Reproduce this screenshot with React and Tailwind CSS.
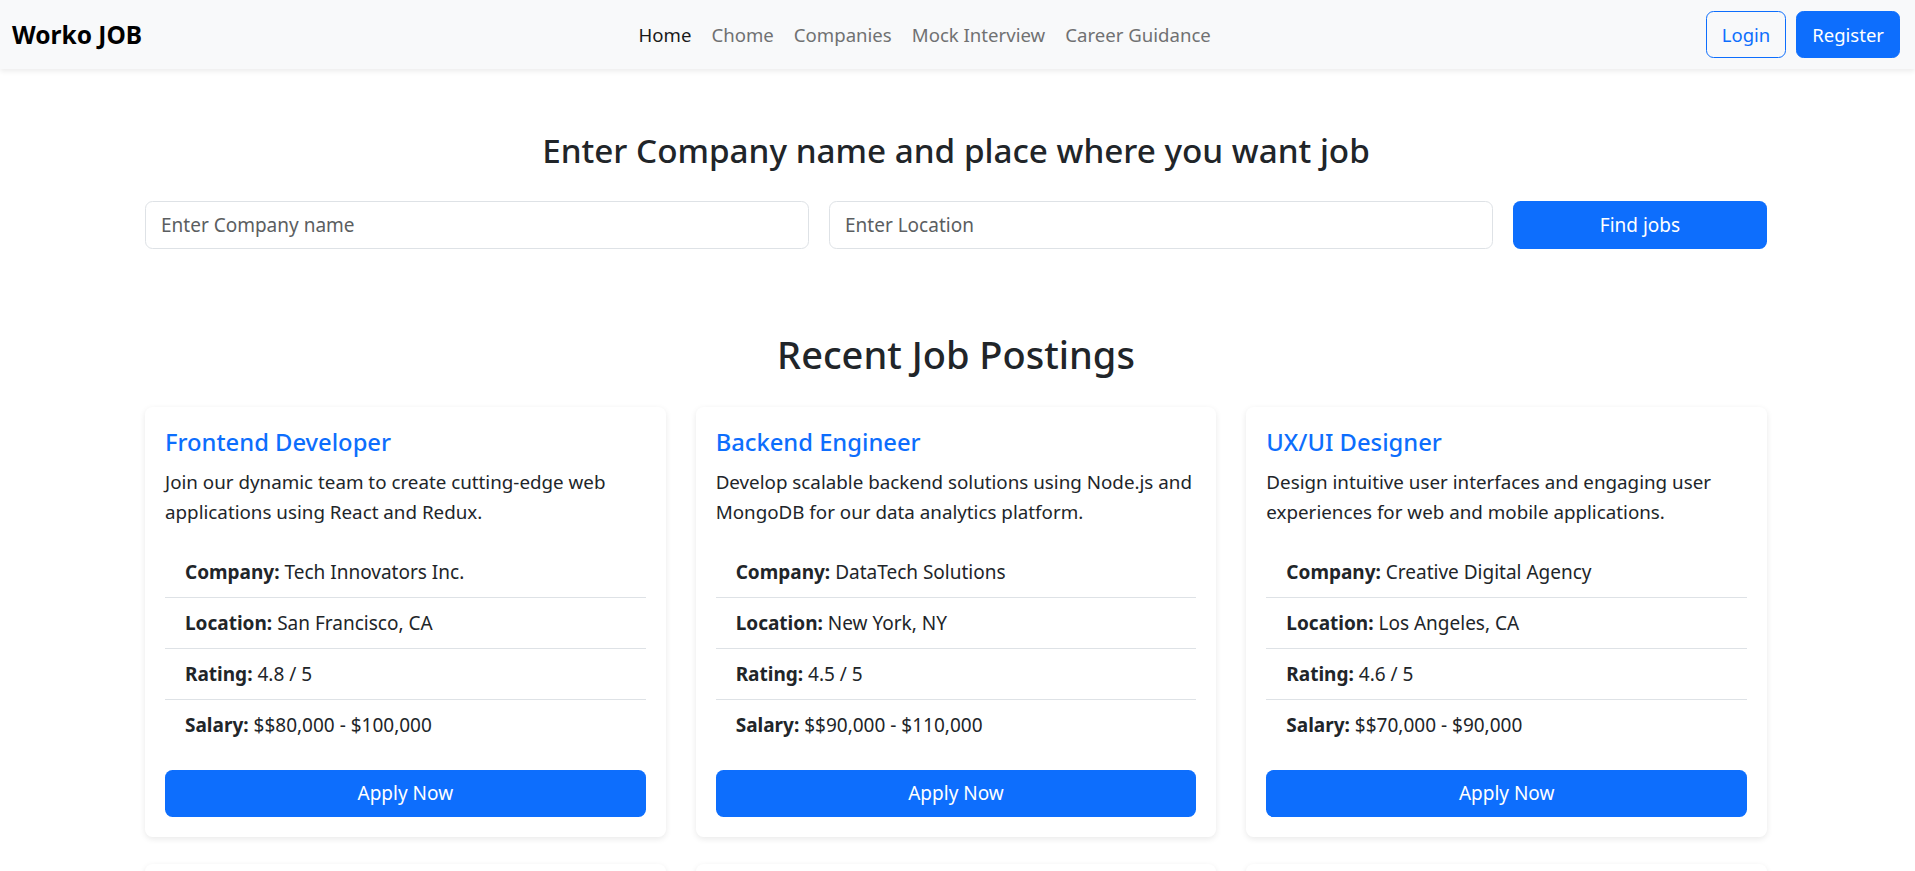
import { useState } from 'react';

const jobs = [
  {
    title: 'Frontend Developer',
    description: 'Join our dynamic team to create cutting-edge web applications using React and Redux.',
    company: 'Tech Innovators Inc.',
    location: 'San Francisco, CA',
    rating: 4.8,
    salary: '$80,000 - $100,000',
  },
  {
    title: 'Backend Engineer',
    description: 'Develop scalable backend solutions using Node.js and MongoDB for our data analytics platform.',
    company: 'DataTech Solutions',
    location: 'New York, NY',
    rating: 4.5,
    salary: '$90,000 - $110,000',
  },
  {
    title: 'UX/UI Designer',
    description: 'Design intuitive user interfaces and engaging user experiences for web and mobile applications.',
    company: 'Creative Digital Agency',
    location: 'Los Angeles, CA',
    rating: 4.6,
    salary: '$70,000 - $90,000',
  },
  {
    title: 'Data Scientist',
    description: 'Build machine learning models and turn large datasets into actionable business insights.',
    company: 'Insight Analytics',
    location: 'Boston, MA',
    rating: 4.7,
    salary: '$95,000 - $120,000',
  },
  {
    title: 'DevOps Engineer',
    description: 'Automate deployments and maintain cloud infrastructure with Docker and Kubernetes.',
    company: 'CloudWorks Ltd.',
    location: 'Seattle, WA',
    rating: 4.4,
    salary: '$85,000 - $105,000',
  },
  {
    title: 'Mobile Developer',
    description: 'Create high quality Android and iOS apps using React Native for millions of users.',
    company: 'AppNest Studio',
    location: 'Austin, TX',
    rating: 4.5,
    salary: '$75,000 - $95,000',
  },
];

const links = ['Home', 'Chome', 'Companies', 'Mock Interview', 'Career Guidance'];

function Navbar() {
  return (
    <nav className="bg-[#f8f9fa] shadow-[0_2.5px_5px_rgba(0,0,0,0.075)] relative z-10">
      <div className="flex items-center h-[69px] pl-[12px] pr-[15px]">
        <a href="#" className="text-[24.5px] leading-[37.5px] font-bold text-black mr-[20px]">
          Worko JOB
        </a>
        <ul className="flex items-center ml-auto mr-[485px]">
          {links.map((l, i) => (
            <li key={l}>
              <a
                href="#"
                className={`block px-[10px] py-[10px] text-[18.6px] leading-[30px] ${i === 0 ? 'text-[#1a1a1a]' : 'text-[#707172]'}`}
              >
                {l}
              </a>
            </li>
          ))}
        </ul>
        <div className="flex items-center gap-[10px]">
          <button className="h-[47.5px] px-[15px] rounded-[7.5px] border-[1.25px] border-[#0d6efd] text-[#0d6efd] text-[18.5px]">
            Login
          </button>
          <button className="h-[47.5px] px-[15px] rounded-[7.5px] border-[1.25px] border-[#0d6efd] bg-[#0d6efd] text-white text-[18.5px]">
            Register
          </button>
        </div>
      </div>
    </nav>
  );
}

function JobCard({ job }) {
  return (
    <div className="bg-white rounded-[7.5px] shadow-[0_2px_6px_rgba(0,0,0,0.09)]">
      <div className="p-[20px]">
        <h5 className="text-[23.75px] leading-[30px] font-medium text-[#0d6efd] mb-[10px]">{job.title}</h5>
        <p className="text-[18.8px] leading-[30px] mb-[20px]">{job.description}</p>
        <ul>
          <li className="px-[20px] py-[10px] border-b-[1.25px] border-[#dee2e6] leading-[30px]">
            <strong>Company:</strong> {job.company}
          </li>
          <li className="px-[20px] py-[10px] border-b-[1.25px] border-[#dee2e6] leading-[30px]">
            <strong>Location:</strong> {job.location}
          </li>
          <li className="px-[20px] py-[10px] border-b-[1.25px] border-[#dee2e6] leading-[30px]">
            <strong>Rating:</strong> {job.rating} / 5
          </li>
          <li className="px-[20px] py-[10px] leading-[30px]">
            <strong>Salary:</strong> ${job.salary}
          </li>
        </ul>
        <button className="mt-[20px] w-full h-[47.5px] rounded-[7.5px] bg-[#0d6efd] text-white text-[19px]">
          Apply Now
        </button>
      </div>
    </div>
  );
}

export default function App() {
  const [company, setCompany] = useState('');
  const [location, setLocation] = useState('');

  return (
    <div className="min-h-screen bg-white text-[#212529] text-[19px] leading-[30px] font-['Noto_Sans',sans-serif]">
      <Navbar />
      <main className="w-[1622px] ml-[145px] pt-[60px] pb-[60px]">
        <h3 className="text-center text-[33.25px] leading-[42px] font-medium mb-[30px]">
          Enter Company name and place where you want job
        </h3>
        <div className="grid grid-cols-[664px_664px_254px] gap-[20px]">
          <input
            type="text"
            value={company}
            onChange={(e) => setCompany(e.target.value)}
            placeholder="Enter Company name"
            className="h-[47.5px] px-[15px] rounded-[7.5px] border-[1.25px] border-[#dee2e6] text-[19px] placeholder:text-[#5b5e61] outline-none"
          />
          <input
            type="text"
            value={location}
            onChange={(e) => setLocation(e.target.value)}
            placeholder="Enter Location"
            className="h-[47.5px] px-[15px] rounded-[7.5px] border-[1.25px] border-[#dee2e6] text-[19px] placeholder:text-[#5b5e61] outline-none"
          />
          <button className="h-[47.5px] rounded-[7.5px] bg-[#0d6efd] text-white text-[19px]">Find jobs</button>
        </div>

        <h2 className="text-center text-[38px] leading-[48px] font-medium mt-[81px] mb-[29px]">
          Recent Job Postings
        </h2>
        <div className="grid grid-cols-3 gap-x-[30px] gap-y-[27px]">
          {jobs.map((job) => (
            <JobCard key={job.title} job={job} />
          ))}
        </div>
      </main>
    </div>
  );
}
